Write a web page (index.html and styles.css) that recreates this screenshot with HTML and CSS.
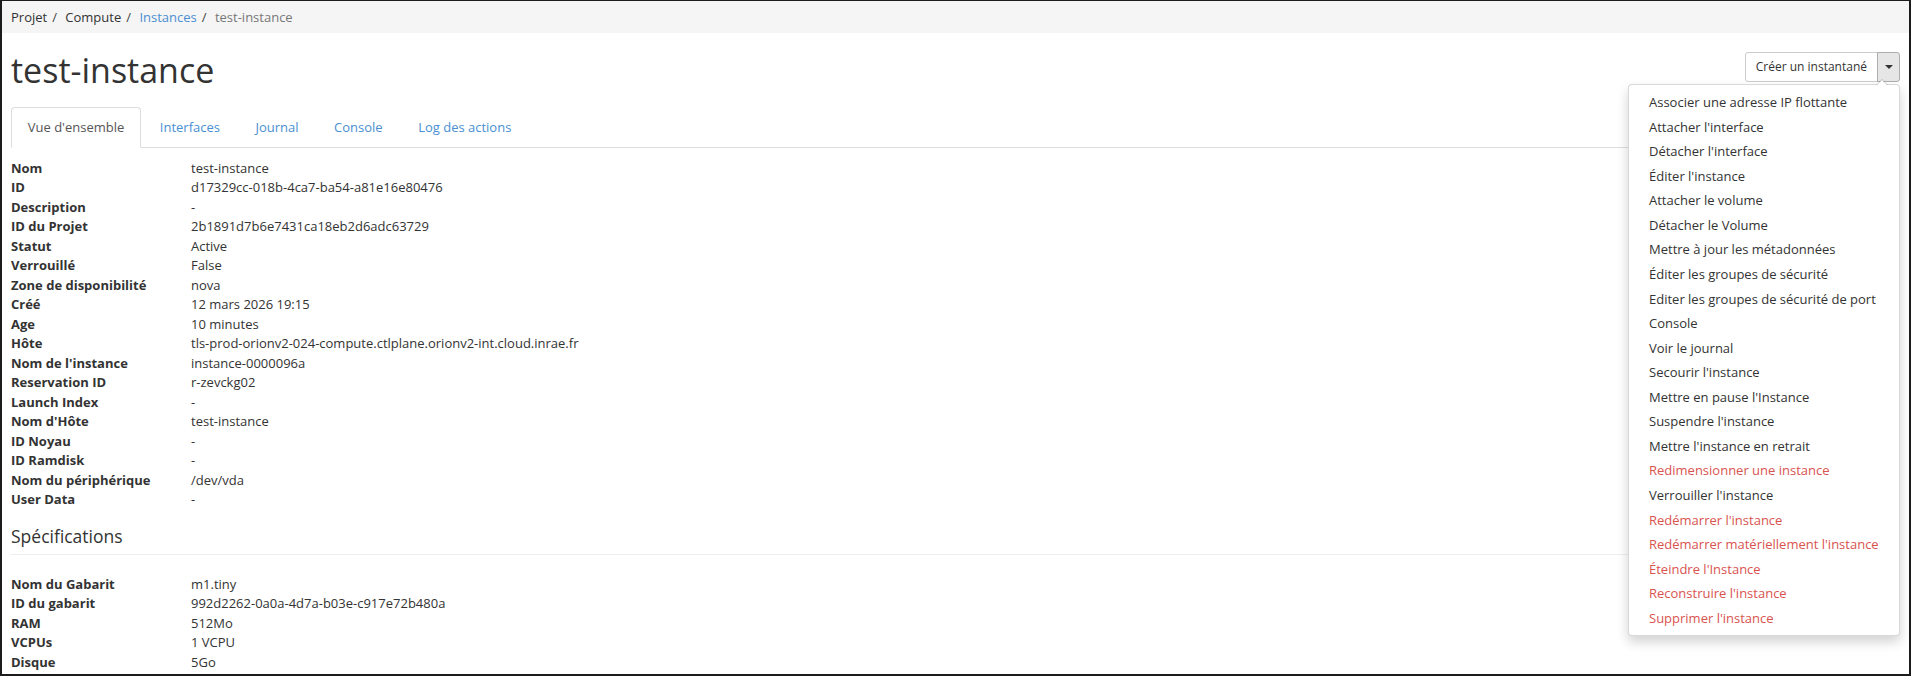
FILE: index.html
```html
<!DOCTYPE html>
<html lang="fr">
<head>
<meta charset="utf-8">
<title>test-instance</title>
<link rel="stylesheet" href="styles.css">
</head>
<body>
<div class="frame">
  <ol class="breadcrumb">
    <li>Projet</li>
    <li>Compute</li>
    <li><a href="#">Instances</a></li>
    <li class="active">test-instance</li>
  </ol>
  <div class="page">
    <div class="page-header">
      <h1>test-instance</h1>
      <div class="btn-group">
        <button class="btn">Créer un instantané</button>
        <button class="btn btn-toggle"><span class="caret"></span></button>
        <ul class="dropdown-menu">
          <li>Associer une adresse IP flottante</li>
          <li>Attacher l'interface</li>
          <li>Détacher l'interface</li>
          <li>Éditer l'instance</li>
          <li>Attacher le volume</li>
          <li>Détacher le Volume</li>
          <li>Mettre à jour les métadonnées</li>
          <li>Éditer les groupes de sécurité</li>
          <li>Editer les groupes de sécurité de port</li>
          <li>Console</li>
          <li>Voir le journal</li>
          <li>Secourir l'instance</li>
          <li>Mettre en pause l'Instance</li>
          <li>Suspendre l'instance</li>
          <li>Mettre l'instance en retrait</li>
          <li class="danger">Redimensionner une instance</li>
          <li>Verrouiller l'instance</li>
          <li class="danger">Redémarrer l'instance</li>
          <li class="danger">Redémarrer matériellement l'instance</li>
          <li class="danger">Éteindre l'Instance</li>
          <li class="danger">Reconstruire l'instance</li>
          <li class="danger">Supprimer l'instance</li>
        </ul>
      </div>
    </div>
    <ul class="nav-tabs">
      <li class="active"><a href="#">Vue d'ensemble</a></li>
      <li><a href="#">Interfaces</a></li>
      <li><a href="#">Journal</a></li>
      <li><a href="#">Console</a></li>
      <li><a href="#">Log des actions</a></li>
    </ul>
    <div class="tab-content">
      <dl class="dl-horizontal">
        <dt>Nom</dt><dd>test-instance</dd>
        <dt>ID</dt><dd>d17329cc-018b-4ca7-ba54-a81e16e80476</dd>
        <dt>Description</dt><dd>-</dd>
        <dt>ID du Projet</dt><dd>2b1891d7b6e7431ca18eb2d6adc63729</dd>
        <dt>Statut</dt><dd>Active</dd>
        <dt>Verrouillé</dt><dd>False</dd>
        <dt>Zone de disponibilité</dt><dd>nova</dd>
        <dt>Créé</dt><dd>12 mars 2026 19:15</dd>
        <dt>Age</dt><dd>10 minutes</dd>
        <dt>Hôte</dt><dd>tls-prod-orionv2-024-compute.ctlplane.orionv2-int.cloud.inrae.fr</dd>
        <dt>Nom de l'instance</dt><dd>instance-0000096a</dd>
        <dt>Reservation ID</dt><dd>r-zevckg02</dd>
        <dt>Launch Index</dt><dd>-</dd>
        <dt>Nom d'Hôte</dt><dd>test-instance</dd>
        <dt>ID Noyau</dt><dd>-</dd>
        <dt>ID Ramdisk</dt><dd>-</dd>
        <dt>Nom du périphérique</dt><dd>/dev/vda</dd>
        <dt>User Data</dt><dd>-</dd>
      </dl>
      <h4>Spécifications</h4>
      <hr>
      <dl class="dl-horizontal spec">
        <dt>Nom du Gabarit</dt><dd>m1.tiny</dd>
        <dt>ID du gabarit</dt><dd>992d2262-0a0a-4d7a-b03e-c917e72b480a</dd>
        <dt>RAM</dt><dd>512Mo</dd>
        <dt>VCPUs</dt><dd>1 VCPU</dd>
        <dt>Disque</dt><dd>5Go</dd>
      </dl>
    </div>
  </div>
</div>
</body>
</html>
```
FILE: styles.css
```css
* { box-sizing: border-box; }
html, body { margin: 0; padding: 0; }
body {
  font-family: "Open Sans", "Liberation Sans", sans-serif;
  font-size: 13px;
  line-height: 1.42857;
  color: #333;
  background: #fff;
}
a { color: #4a8fd1; text-decoration: none; }

.frame {
  width: 1911px;
  height: 676px;
  overflow: hidden;
  border-style: solid;
  border-color: #1c1c1c;
  border-width: 1px 2px 2px 2px;
  background: #fff;
}

.breadcrumb {
  list-style: none;
  margin: 0;
  height: 32px;
  padding: 0 9px;
  background: #f5f5f5;
  display: flex;
  align-items: center;
}
.breadcrumb li + li::before {
  content: "/\00a0";
  padding: 0 5px;
  color: #444;
}
.breadcrumb .active { color: #777; }

.page { padding: 0 9px; }

.page-header {
  display: flex;
  justify-content: space-between;
  align-items: flex-start;
  margin-top: 19px;
}
.page-header h1 {
  margin: 0;
  font-size: 34px;
  font-weight: 400;
  line-height: 1.1;
  color: #333;
}

.btn-group { position: relative; display: flex; }
.btn {
  font-family: inherit;
  font-size: 12px;
  line-height: 1.5;
  height: 30px;
  padding: 5px 10px;
  color: #333;
  background: #fff;
  border: 1px solid #ccc;
  border-radius: 3px 0 0 3px;
}
.btn-toggle {
  width: 23px;
  padding: 0;
  margin-left: -1px;
  background: #e6e6e6;
  border-color: #adadad;
  border-radius: 0 3px 3px 0;
  display: flex;
  align-items: center;
  justify-content: center;
}
.caret {
  width: 0;
  height: 0;
  border-top: 4px solid #333;
  border-left: 4px solid transparent;
  border-right: 4px solid transparent;
}

.dropdown-menu {
  position: absolute;
  top: 32px;
  right: 0;
  z-index: 10;
  width: 272px;
  margin: 0;
  padding: 5px 0;
  list-style: none;
  background: #fff;
  border: 1px solid rgba(0, 0, 0, 0.15);
  border-radius: 4px;
  box-shadow: 0 6px 12px rgba(0, 0, 0, 0.175);
}
.dropdown-menu::before,
.dropdown-menu::after {
  content: "";
  position: absolute;
  width: 0;
  height: 0;
  border-style: solid;
  border-color: transparent;
}
.dropdown-menu::before {
  top: -6px;
  right: 11px;
  border-width: 0 6px 6px 6px;
  border-bottom-color: rgba(0, 0, 0, 0.18);
}
.dropdown-menu::after {
  top: -5px;
  right: 12px;
  border-width: 0 5px 5px 5px;
  border-bottom-color: #fff;
}
.dropdown-menu li {
  padding: 3px 20px;
  line-height: 1.42857;
  white-space: nowrap;
  color: #333;
}
.dropdown-menu li.danger { color: #d9534f; }

.nav-tabs {
  list-style: none;
  margin: 18px 0 0;
  padding: 0;
  display: flex;
  border-bottom: 1px solid #ddd;
}
.nav-tabs li { margin-right: 2px; margin-bottom: -1px; }
.nav-tabs a {
  display: block;
  padding: 10px 15.75px;
  border: 1px solid transparent;
  border-radius: 4px 4px 0 0;
  line-height: 1.42857;
}
.nav-tabs .active a {
  color: #555;
  background: #fff;
  border-color: #ddd;
  border-bottom-color: transparent;
}

.tab-content { padding-top: 11px; }

.dl-horizontal {
  display: grid;
  grid-template-columns: 180px 1fr;
  margin: 0;
  line-height: 19.5px;
}
.dl-horizontal dt { font-weight: 700; }
.dl-horizontal dd { margin: 0; }

h4 {
  margin: 16px 0 0;
  font-size: 17.5px;
  font-weight: 400;
  line-height: 20px;
  color: #333;
}
hr {
  margin: 8px 0 0;
  border: 0;
  border-top: 1px solid #eee;
}
.spec { margin-top: 20px; }
```
